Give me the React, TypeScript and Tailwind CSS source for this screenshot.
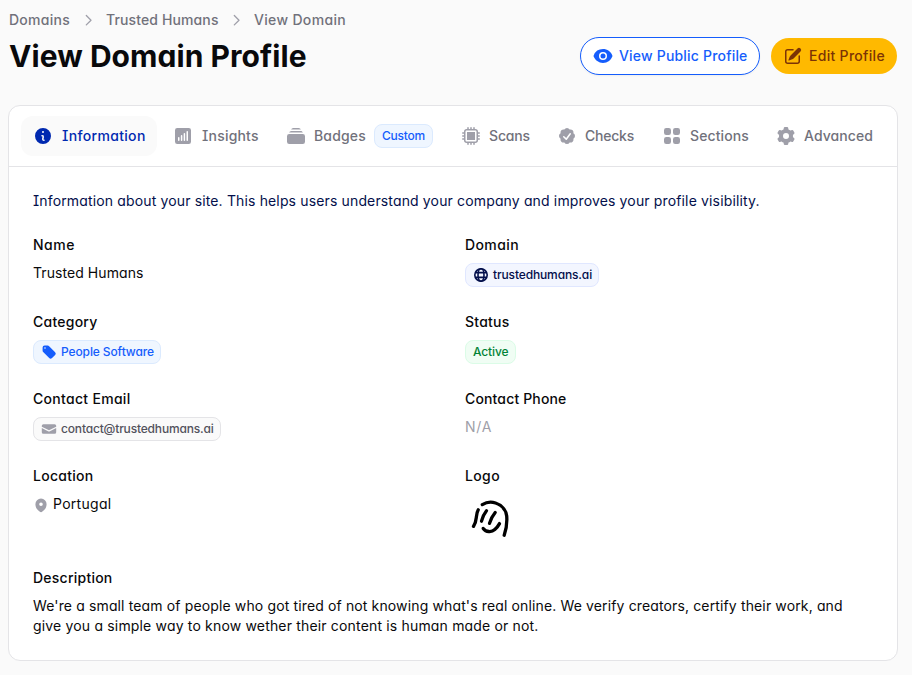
import type { ReactNode } from 'react';
import {
  HiMiniChartBarSquare,
  HiMiniCheckBadge,
  HiMiniCog6Tooth,
  HiMiniCpuChip,
  HiMiniEnvelope,
  HiMiniEye,
  HiMiniInformationCircle,
  HiMiniMapPin,
  HiMiniPencilSquare,
  HiMiniRectangleStack,
  HiMiniSquares2X2,
  HiMiniTag,
} from 'react-icons/hi2';

const tabs = [
  { label: 'Information', icon: HiMiniInformationCircle, text: 'w-[84px] pl-px tracking-[0.33px]', active: true },
  { label: 'Insights', icon: HiMiniChartBarSquare, text: 'w-[57px] pl-px tracking-[0.2px]' },
  { label: 'Badges', icon: HiMiniRectangleStack, text: 'w-[52px] tracking-[0.17px]', badge: 'Custom' },
  { label: 'Scans', icon: HiMiniCpuChip, text: 'w-10 tracking-[-0.15px]' },
  { label: 'Checks', icon: HiMiniCheckBadge, text: 'w-[49px] tracking-[-0.23px]' },
  { label: 'Sections', icon: HiMiniSquares2X2, text: 'w-[58px] tracking-[0.12px]' },
  { label: 'Advanced', icon: HiMiniCog6Tooth, text: 'w-[69px] tracking-[0.08px]' },
];

function ChevronIcon() {
  return (
    <svg
      className="size-4 shrink-0 text-[#9f9fa9]"
      viewBox="0 0 16 16"
      fill="none"
      stroke="currentColor"
      strokeWidth="1.3"
      strokeLinecap="round"
      strokeLinejoin="round"
    >
      <path d="M6.300 3.500L11 8.200L6.300 12.900" />
    </svg>
  );
}

function GlobeIcon() {
  return (
    <svg className="size-4 shrink-0" viewBox="0 0 16 16" fill="none" stroke="currentColor" strokeWidth="1.6">
      <circle cx="8" cy="8" r="6.2" />
      <ellipse cx="8" cy="8" rx="3" ry="6.2" />
      <path d="M2.600 5.600H13.400M2.600 10.400H13.400" />
    </svg>
  );
}

function Logo() {
  return (
    <svg
      className="ml-px mt-0.5"
      width="48"
      height="46"
      viewBox="0 0 48 46"
      fill="none"
      stroke="#000"
      strokeWidth="3.3"
      strokeLinecap="round"
      strokeLinejoin="round"
    >
      <path d="M16.3 8.6C20 6.4 25 5.6 29.5 7C35.5 8.9 40 14 40.7 20C41.2 26 40.3 33 38.2 39.2" />
      <path d="M12.2 13.8C10.8 16 10.6 18.5 10.3 21.5C10 25 9.200 27.500 7.500 30.300" />
      <path d="M20.500 14.800C18.300 17.500 16.600 21 15.500 25.200" />
      <path d="M29.200 16.500C26.500 19.800 24.600 23.200 23.500 27.400" />
      <path d="M17.200 32.400C20 36.200 25.500 36.500 28.800 33.600C31 31.700 32.300 29.800 33.500 27.600" />
    </svg>
  );
}

function Badge({ className, children }: { className: string; children: ReactNode }) {
  return (
    <span
      className={`inline-flex h-6 items-center gap-1 whitespace-nowrap rounded-lg border px-[7px] text-xs font-medium ${className}`}
    >
      {children}
    </span>
  );
}

function Field({ label, labelClass, children }: { label: string; labelClass: string; children: ReactNode }) {
  return (
    <div className="flex flex-col items-start gap-2">
      <dt className={`font-medium ${labelClass}`}>{label}</dt>
      <dd className="flex items-center">{children}</dd>
    </div>
  );
}

export default function App() {
  return (
    <div className="min-h-screen bg-[#fafafa] pl-2 pr-3.5 pt-2.5 font-['Inter','Liberation_Sans',sans-serif] text-sm text-zinc-950 [font-feature-settings:'cv11','cv08']">
      <nav className="flex h-5 items-center gap-2.5 whitespace-nowrap pl-px font-medium text-[#71717b]">
        <a className="w-[61px] tracking-[0.27px]">Domains</a>
        <ChevronIcon />
        <a className="w-[112px] tracking-[0.12px]">Trusted Humans</a>
        <ChevronIcon />
        <span className="tracking-[0.33px]">View Domain</span>
      </nav>

      <header className="mt-[7px] flex h-[38px] items-center justify-between pr-px">
        <h1 className="pl-px text-[30px] font-bold leading-9 tracking-[0.06px]">View Domain Profile</h1>
        <div className="flex items-center gap-[11px] whitespace-nowrap font-medium">
          <button className="flex h-[38px] w-[180px] items-center gap-1.5 rounded-full border border-[#155dfc] bg-white px-3 tracking-[0.19px] text-[#155dfc] shadow-xs">
            <HiMiniEye className="size-5 shrink-0" />
            View Public Profile
          </button>
          <button className="flex h-9 w-[126px] items-center gap-1.5 rounded-full bg-[#ffb900] px-3 tracking-[0.3px] text-[#7b3306]">
            <HiMiniPencilSquare className="size-5 shrink-0" />
            Edit Profile
          </button>
        </div>
      </header>

      <main className="mt-[30px] rounded-xl border border-zinc-200 bg-white">
        <div className="flex h-[61px] items-center gap-1 border-b border-zinc-200 pl-3 font-medium">
          {tabs.map(({ label, icon: Icon, text, active, badge }) => (
            <button
              key={label}
              className={`flex h-10 shrink-0 items-center gap-2 whitespace-nowrap rounded-xl px-3 ${
                active ? 'bg-[#fafafa] text-[#0029b0]' : 'text-[#71717b]'
              }`}
            >
              <Icon className={`size-5 shrink-0 ${active ? 'text-[#0029b0]' : 'text-[#9f9fa9]'}`} />
              <span className={`text-left ${text}`}>{label}</span>
              {badge && (
                <Badge className="w-[59px] border-blue-100 bg-blue-50 tracking-[-0.23px] text-[#155dfc]">{badge}</Badge>
              )}
            </button>
          ))}
        </div>

        <div className="p-6">
          <p className="whitespace-nowrap tracking-[0.145px] text-[#030f4b]">
            Information about your site. This helps users understand your company and improves your profile visibility.
          </p>

          <dl className="mt-6 grid grid-cols-2 grid-rows-[53px_53px_53px_78px] gap-6">
            <Field label="Name" labelClass="tracking-[0.5px]">
              <span className="tracking-[0.07px]">Trusted Humans</span>
            </Field>
            <Field label="Domain" labelClass="tracking-[0.4px]">
              <Badge className="w-[134px] border-indigo-100 bg-[#f3f6ff] tracking-[-0.13px] text-[#030f4b]">
                <GlobeIcon />
                trustedhumans.ai
              </Badge>
            </Field>
            <Field label="Category" labelClass="tracking-[0.24px]">
              <Badge className="w-32 border-blue-100 bg-blue-50 tracking-[-0.11px] text-[#155dfc]">
                <HiMiniTag className="size-4 shrink-0" />
                People Software
              </Badge>
            </Field>
            <Field label="Status" labelClass="tracking-[0.24px]">
              <Badge className="w-[51px] border-green-100 bg-green-50 tracking-[-0.11px] text-green-700">Active</Badge>
            </Field>
            <Field label="Contact Email" labelClass="tracking-[0.3px]">
              <Badge className="w-[188px] border-zinc-200 bg-[#fafafa] tracking-[-0.17px] text-[#52525c]">
                <HiMiniEnvelope className="size-4 shrink-0 text-[#9f9fa9]" />
                contact@trustedhumans.ai
              </Badge>
            </Field>
            <Field label="Contact Phone" labelClass="tracking-[0.15px]">
              <span className="tracking-[0.8px] text-[#9f9fa9]">N/A</span>
            </Field>
            <Field label="Location" labelClass="tracking-[0.28px]">
              <HiMiniMapPin className="mr-1 mt-0.5 size-4 text-[#9f9fa9]" />
              <span className="tracking-[0.29px]">Portugal</span>
            </Field>
            <Field label="Logo" labelClass="tracking-[0.37px]">
              <Logo />
            </Field>
          </dl>

          <section className="mt-6">
            <h2 className="font-medium tracking-[0.24px]">Description</h2>
            <p className="mt-2 whitespace-nowrap tracking-[0.135px]">
              We're a small team of people who got tired of not knowing what's real online. We verify creators, certify their work, and
              <br />
              <span className="tracking-[0.17px]">give you a simple way to know wether their content is human made or not.</span>
            </p>
          </section>
        </div>
      </main>
    </div>
  );
}
